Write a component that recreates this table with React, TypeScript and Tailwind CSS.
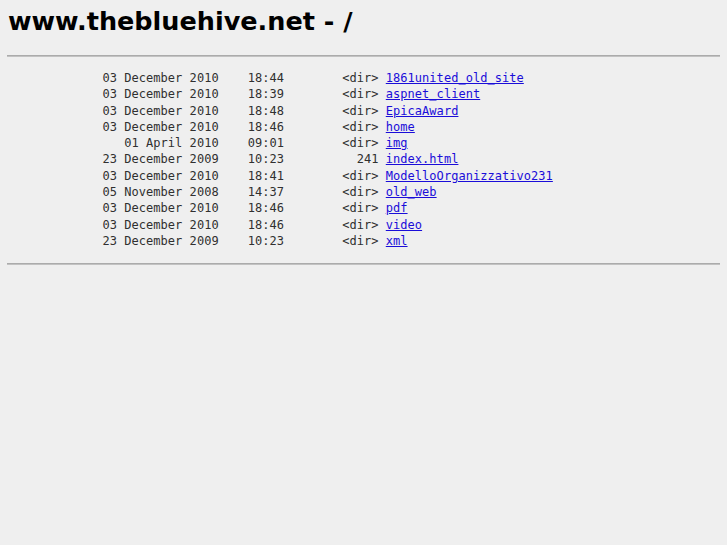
const rows: [string, string, string, string][] = [
  ["03 December 2010", "18:44", "<dir>", "1861united_old_site"],
  ["03 December 2010", "18:39", "<dir>", "aspnet_client"],
  ["03 December 2010", "18:48", "<dir>", "EpicaAward"],
  ["03 December 2010", "18:46", "<dir>", "home"],
  ["01 April 2010", "09:01", "<dir>", "img"],
  ["23 December 2009", "10:23", "241", "index.html"],
  ["03 December 2010", "18:41", "<dir>", "ModelloOrganizzativo231"],
  ["05 November 2008", "14:37", "<dir>", "old_web"],
  ["03 December 2010", "18:46", "<dir>", "pdf"],
  ["03 December 2010", "18:46", "<dir>", "video"],
  ["23 December 2009", "10:23", "<dir>", "xml"],
];

export default function App() {
  return (
    <div className="min-h-[545px] bg-[#efefef] px-2 pt-[5px]">
      <h1 className="font-['DejaVu_Sans',sans-serif] text-[25.5px] font-bold leading-[33px] text-black">
        www.thebluehive.net - /
      </h1>
      <hr className="-mx-px mt-[17px] border-t border-b border-t-[#ababab] border-b-[#c2c2c2]" />
      <pre className="mt-[13px] font-['DejaVu_Sans_Mono',monospace] text-[12px] leading-[16.3px] tracking-[0.04px] text-[#303030]">
        {rows.map(([date, time, size, name]) => (
          <div key={name}>
            {" ".repeat(13) + date.padStart(16) + "    " + time + size.padStart(13) + " "}
            <a href="#" className="text-[#1a0dd9] underline">
              {name}
            </a>
          </div>
        ))}
      </pre>
      <hr className="-mx-px mt-[14px] border-t border-b border-t-[#ababab] border-b-[#c2c2c2]" />
    </div>
  );
}
